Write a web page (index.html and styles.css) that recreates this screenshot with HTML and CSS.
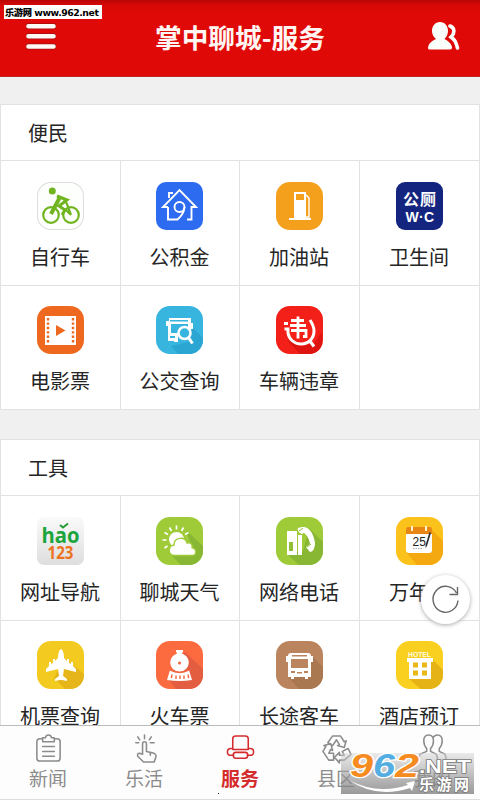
FILE: index.html
```html
<!DOCTYPE html>
<html lang="zh-CN">
<head>
<meta charset="utf-8">
<title>掌中聊城-服务</title>
<link rel="stylesheet" href="styles.css">
</head>
<body>
<div class="app">
<header class="topbar">
  <svg class="menu" viewBox="0 0 30 28"><path d="M2.5 3.2h25M2.5 13.3h25M2.5 23.5h25" stroke="#6b1010" stroke-opacity=".5" stroke-width="6" stroke-linecap="round"/><path d="M2.5 3.2h25M2.5 13.3h25M2.5 23.5h25" stroke="#fffaf6" stroke-width="4.6" stroke-linecap="round"/></svg>
  <h1>掌中聊城-服务</h1>
  <svg class="people" viewBox="0 0 32 28" fill="#fafffb"><path d="M12 0C7 0 4 4 4 9c0 3 1.5 6 4 8-4 2-7.5 4-8 9 0 1 1 1.500 2 1.500h20c1.500 0 2-1 2-2-.5-4-4-6.500-7.500-8.500C18.500 15 20 12 20 9c0-5-3-9-8-9z"/><path d="M22 4c5 2 5 7 1 11 4 3 5 5 6.500 11" fill="none" stroke="#fafffb" stroke-width="3.600" stroke-linecap="round"/></svg>
</header>
<div class="source"><b>乐游网</b> www.962.net</div>
<main>
<section class="panel">
  <h2>便民</h2>
  <div class="grid">
    <div class="cell"><svg class="icon light" viewBox="0 0 47 48"><g fill="none" stroke="#70b51f" stroke-width="2.200"><circle cx="14" cy="33" r="7.800"/><circle cx="34" cy="33" r="7.800"/><path d="M20 14l10 4-8 6 6 4-3 5" stroke-width="3"/><path d="M23 15l-9 17" stroke-width="4"/><path d="M27 17l3 5 4 11M34 33l-5-5"/></g><circle cx="15.300" cy="9" r="3.500" fill="#70b51f"/></svg><span>自行车</span></div>
    <div class="cell"><svg class="icon blue" viewBox="0 0 47 48"><g fill="none" stroke="#fff" stroke-width="1.900"><path d="M12 25H7L23.500 8 40 25h-4.500v12.500H31M12 25v12.500h9.500Q28 32 28.500 25M13 16v-5h4"/><circle cx="23.500" cy="25" r="5"/></g></svg><span>公积金</span></div>
    <div class="cell"><svg class="icon orange" viewBox="0 0 47 48"><path fill="#fff" d="M18 10h12v26h5v2H13v-2h5z"/><path fill="#f4a01d" d="M20 12h8v6h-8z"/><path d="M30 13l3 3v19h-3" fill="none" stroke="#fff" stroke-width="1.400"/></svg><span>加油站</span></div>
    <div class="cell"><svg class="icon navy" viewBox="0 0 47 48" fill="#fff"><text class="wc-cn" x="7" y="23" textLength="33">公厕</text><text class="wc" x="9.500" y="40" textLength="28.500">W·C</text></svg><span>卫生间</span></div>
    <div class="cell"><svg class="icon film" viewBox="0 0 47 48"><path fill="#fff" d="M8 10h31v29H8z"/><path fill="none" stroke="#ee691f" stroke-width="2.400" stroke-dasharray="2.400 2" d="M11 12v26M36 12v26"/><path fill="#ee691f" d="M19 19l9.500 5.500L19 30z"/></svg><span>电影票</span></div>
    <div class="cell"><svg class="icon cyan" viewBox="0 0 47 48"><path fill="#2ba6d2" d="M34 19l13 13v7q-2 8-10 9H22l-7-8 18-4z"/><path fill="#fff" d="M13 12h22v5h2v6h-2v7H22v6h-4v-1h-6V20h-2v-5h3z"/><path fill="#37b5df" d="M14 14h18v1.500H14zM15 18h17v9H15zM14 30h5v2h-5z"/><circle cx="28.500" cy="27" r="6" fill="#37b5df" stroke="#fff" stroke-width="2.500"/><path d="M32.500 31.500l4 6" stroke="#fff" stroke-width="3"/></svg><span>公交查询</span></div>
    <div class="cell"><svg class="icon red" viewBox="0 0 47 48"><path fill="#dd1410" d="M11 34L24 48h12q8-1 10-10V26L38 38z"/><g fill="none" stroke="#fff"><path stroke-width="3" d="M8 17.500h4M8.500 23h3.500v4c1 6 6 11 13 11 8 0 13-6 13-13 0-5-2-8-4-11M33.500 34.500l4.500 6"/><path stroke-width="2.800" d="M15 14.500h13M14 19.500h16M15 24.500h15v6h-3M22 10.500v22"/></g></svg><span>车辆违章</span></div>
    <div class="cell"></div>
  </div>
</section>
<section class="panel">
  <h2>工具</h2>
  <div class="grid">
    <div class="cell"><svg class="icon hao" viewBox="0 0 47 48"><text class="hao-t" x="4.500" y="25.500" textLength="38" lengthAdjust="spacingAndGlyphs" fill="#1ba53c">hao</text><text class="num-t" x="10.500" y="41.500" textLength="26" lengthAdjust="spacingAndGlyphs" fill="#ed7320">123</text><path d="M23 8l3 2.500 5-4" fill="none" stroke="#269b35" stroke-width="2"/></svg><span>网址导航</span></div>
    <div class="cell"><svg class="icon green" viewBox="0 0 47 48"><path fill="#88b733" d="M30 13l17 16v8q-2 9-10 11H25L12 35l25-1z"/><circle cx="20.500" cy="22.500" r="7.500" fill="#fff"/><path d="M20.500 8.500v4M13.500 10.500l2 3.500M27.500 10.500l-2 3.500M8.500 15.500l3.500 2M32.500 15.500l-3.500 2M6.500 23h4M8.500 31l3-2" stroke="#fff" stroke-width="1.700"/><path d="M19 38.500c-8 0-7-10-1-10.500 0-8 11-9 13-2 4-1 6 2 5 4.500 6 2 4 8 0 8z" fill="#fff" stroke="#9fcb39" stroke-width="1.400"/></svg><span>聊城天气</span></div>
    <div class="cell"><svg class="icon green" viewBox="0 0 47 48"><path fill="#88b733" d="M33 11l14 14v13q-2 8-10 10H23L11 37l16-3z"/><path fill="#fff" d="M11 14h10v24H11zM22 18h4v20h-4zM22 11l4-1 3 5-3 2c-3-1-5-4-4-6z"/><path fill="#91bf34" d="M13 25h4v9h-4z"/><path fill="#fff" d="M26 10c7-1 12 7 13 16 0 5-2 9-5 9l-4-5 4-3c-1-6-4-11-8-12z"/><path d="M23 14l4-3M31 30l4-3" stroke="#8fbd3b"/></svg><span>网络电话</span></div>
    <div class="cell"><svg class="icon amber" viewBox="0 0 47 48"><path fill="#f4a911" d="M36 13l11 11v14q-2 8-10 10H21L11 36z"/><path fill="#fff" d="M10 15h26v18q0 3-3 3H13q-3 0-3-3z"/><path fill="#e78614" d="M12 10h22q2 0 2 2v5H10v-5q0-2 2-2z"/><path stroke="#fff1cc" stroke-width="2" d="M16 9v5M30 9v5"/><text class="date" x="16.500" y="29">25</text><path d="M35 16l-4 13-1.500 2v-3l4-13z" fill="#333"/><path d="M17 31.500h9" stroke="#aaa" stroke-dasharray="1.500 1"/></svg><span>万年历</span></div>
    <div class="cell"><svg class="icon yellow" viewBox="0 0 47 48"><path fill="#e5b51a" d="M27 17l20 16v5q-2 9-10 10H28L17 37z"/><path fill="#fff" d="M24 8c2 1 3 5 3 9l3 3v-2h2v4l2 1v-2h2v4l3 3v3l-12-3-1 7 4 3v2l-5-1h-2l-5 1v-2l4-3-1-7-12 3v-3l3-3v-4h2v2l2-1v-4h2v2l3-3c0-4 1-8 3-9z"/></svg><span>机票查询</span></div>
    <div class="cell"><svg class="icon coral" viewBox="0 0 47 48"><path fill="#e35e40" d="M29 11l18 17v10q-2 9-10 10H20L12 38z"/><path fill="#fff" d="M20 9h7v2.500h-1v1.500H21v-1.500h-1z"/><circle cx="23.500" cy="21.500" r="9.300" fill="#fff"/><path fill="#fff" d="M14 29q9.500 5 19 0l3 10q-12.500 2-25 0z"/><circle cx="23.500" cy="22" r="1.500" fill="#f3653f"/><path d="M16 33.500l-.7 3.500M20 34.500v3.500M24 34.500v3.500M28 34.500v3.500M32 33.500l.7 3.500M14 29q9.500 5 19 0" stroke="#f3653f" stroke-width="1.400" fill="none"/></svg><span>火车票</span></div>
    <div class="cell"><svg class="icon brown" viewBox="0 0 47 48"><path fill="#a97750" d="M36 15l11 11v12q-2 9-10 10H23L12 36z"/><path fill="#fff" d="M15 12h17q3 0 3 3h2v6h-2v15h-3v2h-3v-2H18v2h-3v-2h-3V21h-2v-6h2q0-3 3-3z"/><path fill="#ba855e" d="M16 14h15v1.500H16zM15 18h17v9H15zM15 30h4v2h-4zM28 30h4v2h-4zM21 31h5v1.500h-5z"/></svg><span>长途客车</span></div>
    <div class="cell"><svg class="icon gold" viewBox="0 0 47 48"><path fill="#e5b315" d="M37 19l10 10v9q-2 9-10 10H25L13 38z"/><text class="hotel" x="12" y="15.500" textLength="23" lengthAdjust="spacingAndGlyphs" fill="#fffbe0">HOTEL</text><path fill="#fff" d="M11 17h26v4h-2v17H13V21h-2z"/><path fill="#e7b817" d="M17 21.500h5v5h-5zM26 21.500h5v5h-5zM17 29.500h5v5h-5zM26 29.500h5v5h-5z"/></svg><span>酒店预订</span></div>
  </div>
</section>
</main>
<nav class="tabs">
  <div class="tab"><svg viewBox="0 0 32 32"><path d="M10 6H7q-3 0-3 3v17q0 3 3 3h18q3 0 3-3V9q0-3-3-3h-3M10 9V5h3q0-3 3-3t3 3h3v4zM10 14h12M10 19h12M10 24h12"/></svg><span>新闻</span></div>
  <div class="tab"><svg viewBox="0 0 32 32"><path d="M14 22V11q0-2 2-2t2 2v8l8 2q2 1 2 3l-2 6H15l-6-6q-1-3 2-3zM16 2v4M9 4l2 3M23 4l-2 3M7 10h3M22 10h4M22 20v3"/></svg><span>乐活</span></div>
  <div class="tab active"><svg viewBox="0 0 32 32"><path d="M8 17V6q0-3 3-3h10q3 0 3 3v11M8 16H6q-3.500 0-3.500 3.500T6 23h3M24 16h2q3.500 0 3.500 3.500T26 23h-3M11 20h10q2.500 0 2.500 3T21 26H11q-2.500 0-2.500-3t2.500-3zM8 17h16"/></svg><span>服务</span></div>
  <div class="tab"><svg viewBox="0 0 32 32"><path d="M7 10l5-7h8l4 6 2-1-2 7-7-2 2-1-3-5-4 6zM8 28l-6-9 3-5-2-1 7-2 2 7-2-1-2 4h5v7zM24 28h-5v3l-5-6 5-5v3h5l-2-4 6-3 3 6z"/></svg><span>县区</span></div>
  <div class="tab"><svg viewBox="0 0 32 32"><path d="M2 26l1-4 7-3v-3q-3-3-3-8 0-6 5-6t5 6q0 5-3 8v3l6 3 1 4M17 4q2-2 4-2 5 0 5 6 0 5-3 8v3l6 3 1 4"/></svg><span>我的</span></div>
</nav>
<button class="refresh" aria-label="刷新"><svg viewBox="0 0 30 32"><path d="M27 16.500A12.500 13 0 1 1 25.500 9M26.500 3v7.500h-8" fill="none" stroke="#666" stroke-width="1.400"/></svg></button>
<div class="badge">
  <svg viewBox="0 0 133 41"><g class="digits"><text x="9" y="24" textLength="23" lengthAdjust="spacingAndGlyphs" fill="#f68b1f">9</text><text x="32" y="24" textLength="22" lengthAdjust="spacingAndGlyphs" fill="#55aee2">6</text><text x="54" y="24" textLength="24" lengthAdjust="spacingAndGlyphs" fill="#f68b1f">2</text></g><text class="net" x="78" y="19.500" textLength="52" lengthAdjust="spacingAndGlyphs">.NET</text><text class="site" x="78" y="37" textLength="50">乐游网</text><path d="M8 27q28 15 59 5l-2-2 9-2-3 10-2-3Q35 46 8 27z" fill="#fff"/></svg>
</div>
<i class="speck"></i>
</div>
</body>
</html>
```
FILE: styles.css
```css
* { box-sizing: border-box; }
body { margin: 0; font-family: "Noto Sans CJK SC", sans-serif; color: #252525; }
.app { position: relative; width: 480px; height: 800px; overflow: hidden; display: flex; flex-direction: column; background: #f0f0f0; }
.topbar { height: 77px; flex: none; display: flex; align-items: center; justify-content: space-between; padding: 0 20px 2px 26px; background: linear-gradient(#b90505, #d60807 5px, #df0908 14px); border-bottom: 1px solid #b82820; }
.topbar h1 { margin: 0 4px 0 0; font-size: 26.700px; line-height: 40px; font-weight: 700; color: #fff6f4; white-space: nowrap; }
.menu { width: 30px; height: 28px; margin-top: -1px; }
.people { width: 32px; height: 28px; margin-top: -2px; }
.source { position: absolute; left: 4px; top: 5px; width: 98px; height: 14px; background: #fff; color: #000; font: 700 9.300px/15px "DejaVu Sans", "Noto Sans CJK SC", sans-serif; letter-spacing: -.45px; white-space: nowrap; overflow: hidden; padding-left: 1px; }
main { flex: 1; min-height: 0; overflow: hidden; padding-top: 27px; display: flex; flex-direction: column; gap: 29px; }
.panel { flex: none; background: #fff; border: 1px solid #e2e2e2; }
.panel h2 { margin: 0; height: 55px; padding-left: 27px; font-size: 20px; font-weight: 400; line-height: 56px; }
.grid { display: grid; grid-template-columns: 120px 119px 120px 119px; grid-auto-rows: 124.500px; }
.cell { border-top: 1px solid #e2e2e2; border-right: 1px solid #e2e2e2; display: flex; flex-direction: column; align-items: center; padding: 20.500px 1px 0 0; }
.cell:nth-child(4n) { border-right: 0; }
.cell span { font-size: 20px; line-height: 30px; margin-top: 12px; white-space: nowrap; }
.icon { width: 47px; height: 48px; border-radius: 14px; flex: none; }
.light { background: #fdfffc; box-shadow: inset 0 0 0 1px #ddd; }
.blue { background: #2d6bf1; border-radius: 10px; }
.orange { background: #f4a01d; }
.navy { background: #142580; border-radius: 9px; }
.film { background: #ee691f; }
.cyan { background: #37b5df; }
.red { background: #f32019; }
.hao { background: linear-gradient(#fafafa, #dedede); border-radius: 7px; }
.green { background: #9fcb39; }
.amber { background: #fcc21c; }
.yellow { background: #f3ca20; }
.coral { background: #fc6b40; }
.brown { background: #ba855e; }
.gold { background: #f9cf20; }
.wc-cn { font-size: 16px; font-weight: 700; }
.wc { font: 700 14px "Liberation Sans", sans-serif; }
.hao-t { font: 700 21px "Open Sans", sans-serif; }
.num-t { font: 700 17px "Open Sans", sans-serif; }
.date { font: 12px "Liberation Sans", sans-serif; fill: #222; }
.hotel { font: 700 8px "Liberation Sans", sans-serif; }
.tabs { height: 75px; flex: none; border-top: 1px solid #bbb; border-bottom: 1px solid #ddd; background: #fdfdfd; display: grid; grid-template-columns: repeat(5, 96px); color: #8c8c8c; }
.tab { display: flex; flex-direction: column; align-items: center; padding-top: 7px; }
.tab svg { width: 31px; height: 31px; fill: none; stroke: currentColor; stroke-width: 1.600; stroke-linejoin: round; stroke-linecap: round; }
.tab span { font-size: 19px; line-height: 28px; font-weight: 400; }
.active { color: #d42b2d; }
.active span { font-weight: 700; }
.refresh { position: absolute; left: 421px; top: 575px; width: 49px; height: 49px; padding: 0; border: 0; border-radius: 50%; background: #fff; box-shadow: 0 1px 4px #aaa; display: grid; place-items: center; }
.refresh svg { width: 30px; height: 32px; }
.badge { position: absolute; left: 341px; top: 753px; width: 133px; height: 41px; background: linear-gradient(rgba(215,215,215,.5), rgba(120,120,120,.75)); }
.badge svg { display: block; width: 133px; height: 41px; overflow: visible; }
.digits { font: italic 700 33px "Liberation Sans", sans-serif; stroke: #fff; stroke-width: 2.500px; paint-order: stroke; }
.net { font: 700 19px "Liberation Sans", sans-serif; fill: #fff; stroke: #777; stroke-width: 1.500px; paint-order: stroke; }
.site { font-size: 15px; font-weight: 700; fill: #fff; stroke: #777; stroke-width: 1.500px; paint-order: stroke; }
.speck { position: absolute; left: 218px; top: 793px; width: 1px; height: 1px; background: #222; }
```
